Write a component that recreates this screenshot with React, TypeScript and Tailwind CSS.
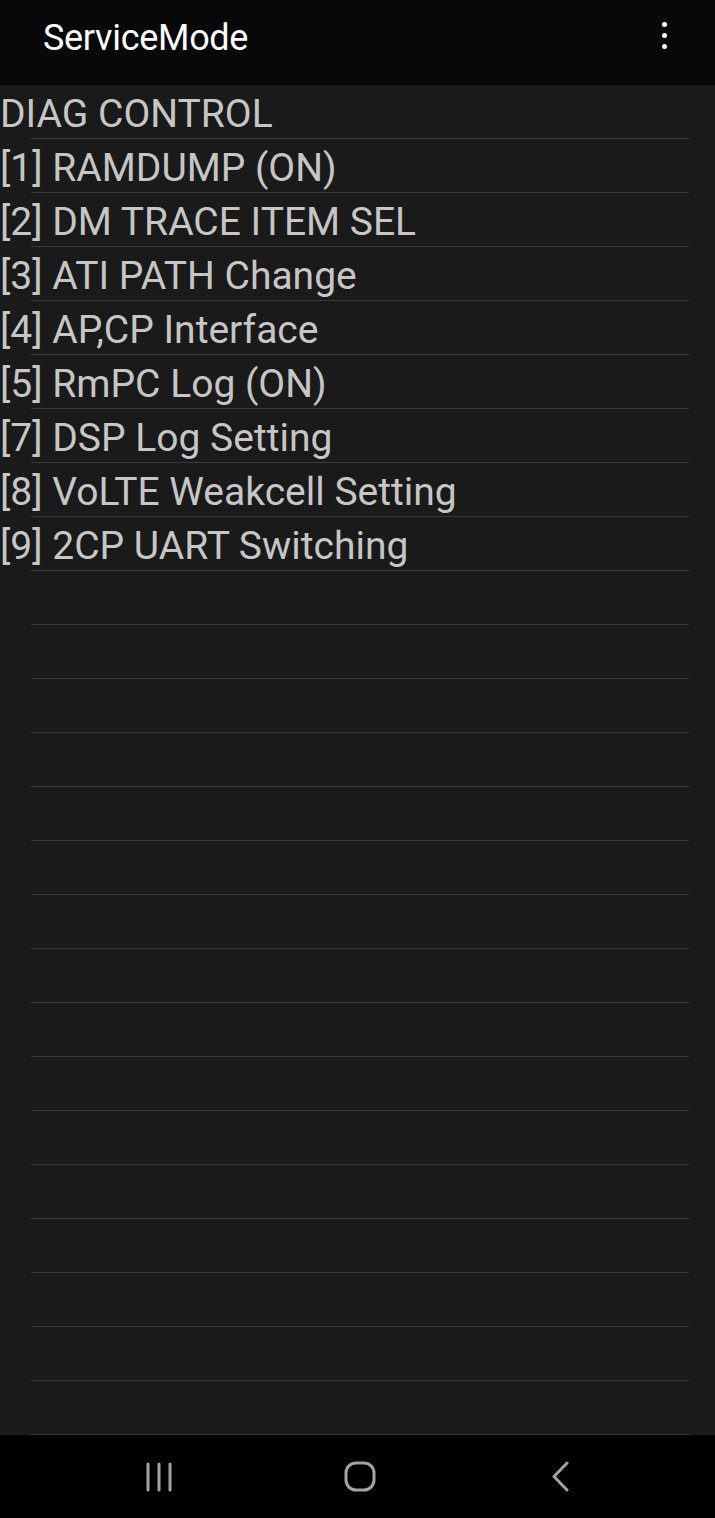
import { useState } from 'react'

const items = [
  'DIAG CONTROL',
  '[1] RAMDUMP (ON)',
  '[2] DM TRACE ITEM SEL',
  '[3] ATI PATH Change',
  '[4] AP,CP Interface',
  '[5] RmPC Log (ON)',
  '[7] DSP Log Setting',
  '[8] VoLTE Weakcell Setting',
  '[9] 2CP UART Switching',
]

export default function App() {
  const [selected, setSelected] = useState<number | null>(null)
  const rows = [...items, ...Array(25 - items.length).fill('')]

  return (
    <div className="w-[715px] h-[1518px] flex flex-col bg-[#1a1a1a] font-['Roboto','Liberation_Sans',sans-serif] overflow-hidden">
      <header className="h-[85px] shrink-0 bg-[#080808] flex items-center justify-between pl-[43px] pr-[41px] pb-[9px]">
        <span className="text-white text-[36px] leading-none tracking-[-0.3px]">ServiceMode</span>
        <button className="flex flex-col items-center gap-[6px] w-[20px] mb-[5px]" aria-label="More">
          <span className="w-[5px] h-[5px] rounded-full bg-white" />
          <span className="w-[5px] h-[5px] rounded-full bg-white" />
          <span className="w-[5px] h-[5px] rounded-full bg-white" />
        </button>
      </header>

      <ul className="flex flex-col">
        {rows.map((label, i) => (
          <li
            key={i}
            onClick={() => setSelected(i)}
            className={`relative h-[54px] shrink-0 flex items-center ${selected === i ? 'bg-[#222]' : ''}`}
          >
            <span className="text-[#c6c6c6] text-[39px] leading-none whitespace-nowrap pt-[4px]">{label}</span>
            <div className="absolute left-[31px] right-[26px] bottom-0 h-px bg-[#3a3a3a]" />
          </li>
        ))}
      </ul>

      <nav className="flex-1 bg-black flex items-center justify-center gap-[161px] pl-[5px]">
        <div className="w-[40px] flex justify-center">
          <svg width="28" height="30" viewBox="0 0 28 30">
            <path d="M3 2v26M14 2v26M25 2v26" stroke="#a3a3a3" strokeWidth="3" strokeLinecap="round" />
          </svg>
        </div>
        <div className="w-[40px] flex justify-center">
          <svg width="32" height="31" viewBox="0 0 32 31">
            <rect x="2" y="2" width="28" height="27" rx="10" fill="none" stroke="#a3a3a3" strokeWidth="3" />
          </svg>
        </div>
        <div className="w-[40px] flex justify-center">
          <svg width="20" height="31" viewBox="0 0 20 31">
            <path d="M16 2L3 15.5 16 29" fill="none" stroke="#a3a3a3" strokeWidth="3" strokeLinecap="round" strokeLinejoin="round" />
          </svg>
        </div>
      </nav>
    </div>
  )
}
